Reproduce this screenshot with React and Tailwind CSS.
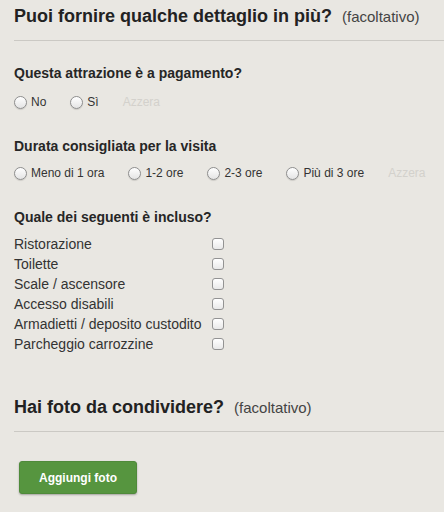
import React from 'react'

const font = { fontFamily: '"Liberation Sans", Arial, Helvetica, sans-serif' }

const Radio = () => (
  <span className="inline-block w-[13px] h-[13px] rounded-full border border-[#8e8e8e] bg-gradient-to-b from-white to-[#e4e4e4] shadow-[0_1px_1px_rgba(0,0,0,0.12)]" />
)

const Checkbox = () => (
  <span className="inline-block w-[12px] h-[12px] rounded-[3px] border border-[#939393] bg-gradient-to-b from-white to-[#e9e9e9]" />
)

const RadioRow = ({ options, className }) => (
  <div className={`flex items-center h-[18px] text-[12px] leading-[18px] text-[#333] ${className}`}>
    {options.map((o) => (
      <label key={o} className="flex items-center mr-[24px]">
        <Radio />
        <span className="ml-[4px]">{o}</span>
      </label>
    ))}
    <span className="text-[#d3d1cc]">Azzera</span>
  </div>
)

const SectionTitle = ({ children, className }) => (
  <h3 className={`text-[14px] leading-[18px] font-bold text-[#262626] ${className}`}>{children}</h3>
)

const BigHeader = ({ title, className }) => (
  <div className={`flex items-baseline border-b border-[#cbc9c4] ${className}`}>
    <h2 className="text-[18px] leading-[22px] font-bold text-[#222]">{title}</h2>
    <span className="ml-[10px] text-[15px] leading-[22px] text-[#444]">(facoltativo)</span>
  </div>
)

const items = [
  'Ristorazione',
  'Toilette',
  'Scale / ascensore',
  'Accesso disabili',
  'Armadietti / deposito custodito',
  'Parcheggio carrozzine',
]

export default function App() {
  return (
    <div className="w-[444px] h-[512px] overflow-hidden bg-[#e9e7e2] pl-[14px]" style={font}>
      <BigHeader title="Puoi fornire qualche dettaglio in più?" className="h-[41px] pt-[5px]" />

      <SectionTitle className="mt-[23px]">Questa attrazione è a pagamento?</SectionTitle>
      <RadioRow className="mt-[11px]" options={['No', 'Sì']} />

      <SectionTitle className="mt-[26px]">Durata consigliata per la visita</SectionTitle>
      <RadioRow className="mt-[9px]" options={['Meno di 1 ora', '1-2 ore', '2-3 ore', 'Più di 3 ore']} />

      <SectionTitle className="mt-[26px]">Quale dei seguenti è incluso?</SectionTitle>
      <div className="mt-[8px] grid grid-cols-[198px_12px] text-[14px] leading-[20px] text-[#333]">
        {items.map((it) => (
          <React.Fragment key={it}>
            <span className="whitespace-nowrap">{it}</span>
            <span className="flex items-center">
              <Checkbox />
            </span>
          </React.Fragment>
        ))}
      </div>

      <BigHeader title="Hai foto da condividere?" className="mt-[42px] h-[36px]" />

      <button className="mt-[29px] ml-[5px] w-[118px] h-[33px] rounded-[3px] bg-[#56953f] border border-[#4f8a3a] shadow-[0_1px_2px_rgba(0,0,0,0.3)] text-white text-[12px] font-bold">
        Aggiungi foto
      </button>
    </div>
  )
}
